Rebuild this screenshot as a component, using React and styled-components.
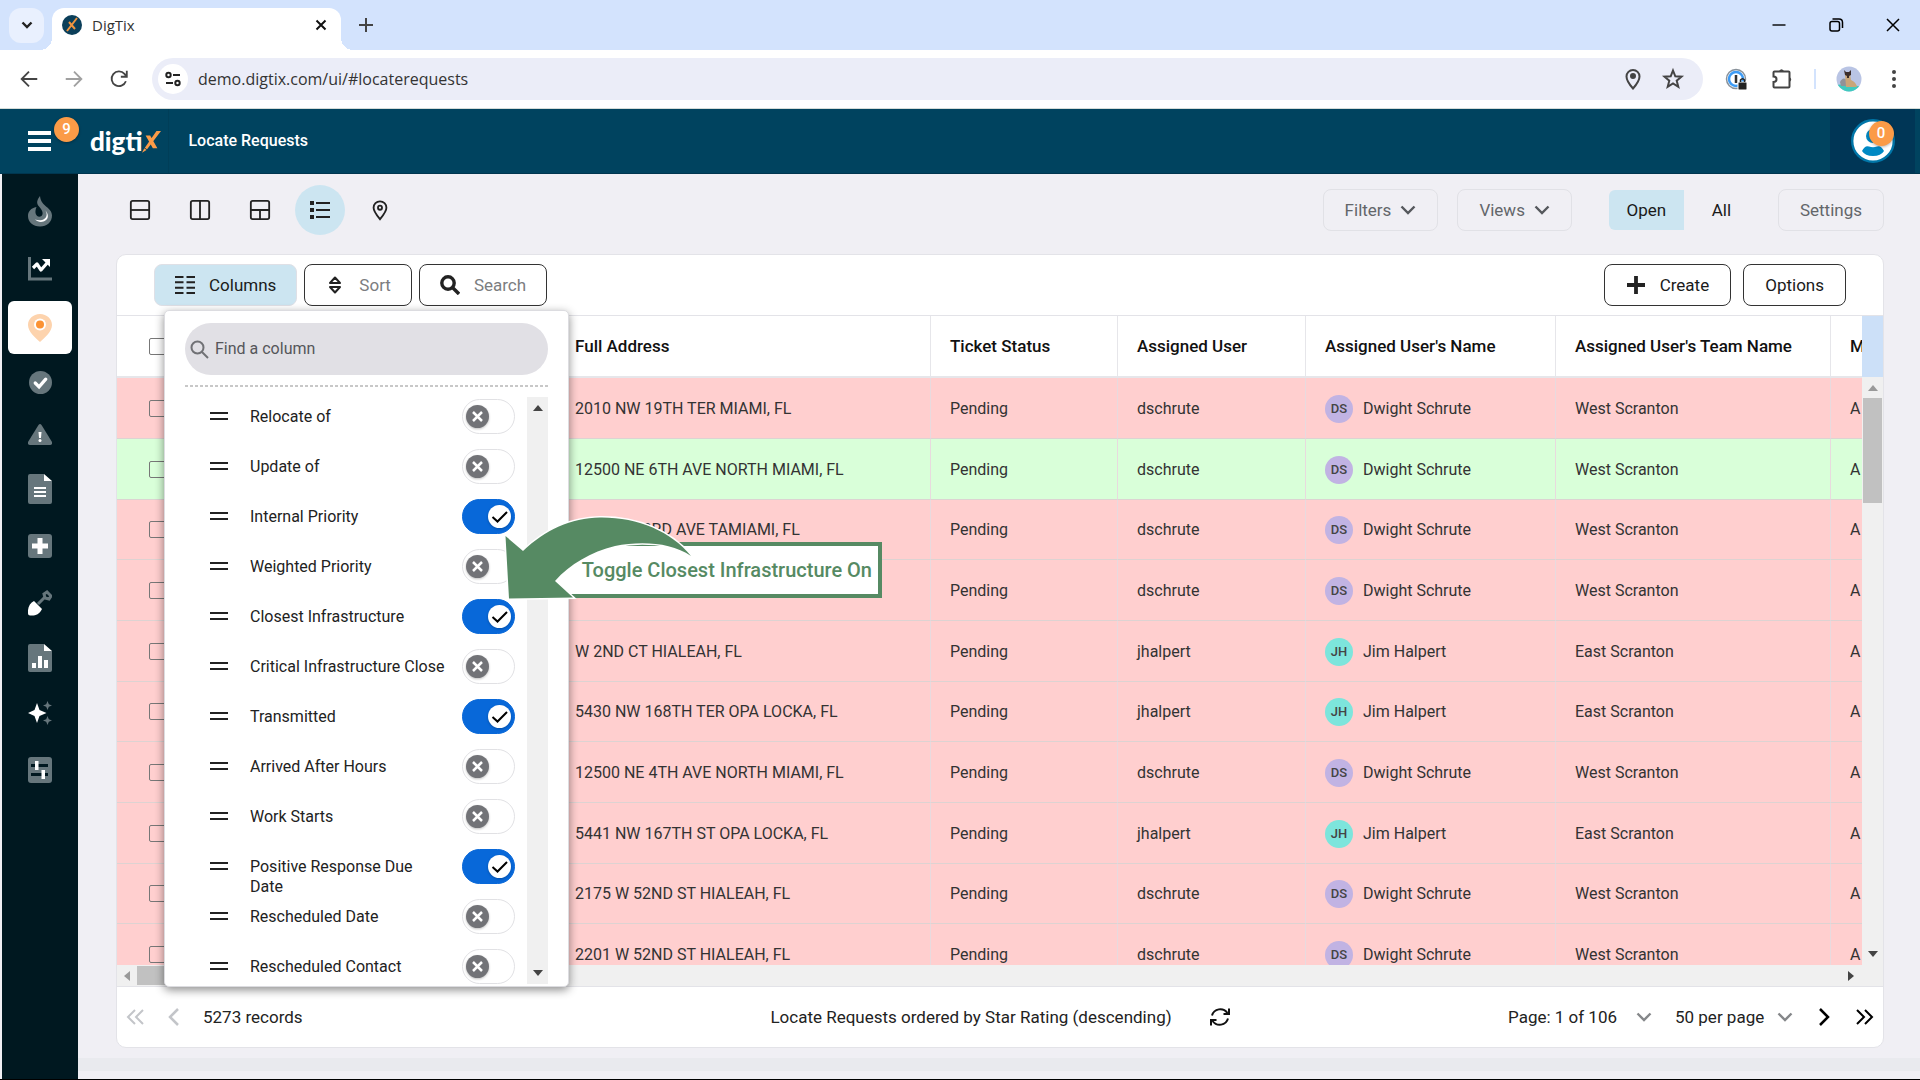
import React, { useState } from "react";
import styled, { createGlobalStyle, css } from "styled-components";

const GlobalStyle = createGlobalStyle`
  * {
    box-sizing: border-box;
  }

  body {
    margin: 0;
    background: #f0eff4;
    color: #222;
    font-family: Roboto, "Liberation Sans", sans-serif;
    font-size: 16px;
    line-height: 20px;
  }

  button, input, select {
    font: inherit;
    color: inherit;
    margin: 0;
    padding: 0;
    border: 0;
    background: none;
  }

  svg {
    display: block;
    flex-shrink: 0;
  }
`;

const Page = styled.div`
  display: flex;
  flex-direction: column;
  height: 100vh;
  min-width: 1280px;
  overflow: hidden;
  border-bottom: 1px solid #000;
`;

/* Browser chrome */

const TabStrip = styled.div`
  display: flex;
  align-items: center;
  height: 50px;
  padding: 0 19px 0 9px;
  background: #d3e3fd;
  font-family: "Open Sans", "Noto Sans", sans-serif;
`;

const TabSearch = styled.button`
  display: flex;
  align-items: center;
  justify-content: center;
  width: 35px;
  height: 35px;
  border-radius: 12px;
  background: #e9f0fe;
`;

const Tab = styled.div`
  position: relative;
  display: flex;
  align-items: center;
  align-self: flex-end;
  width: 289px;
  height: 42px;
  margin-left: 8px;
  padding: 0 14px 8px 10px;
  border-radius: 12px 12px 0 0;
  background: #fff;
  color: #333;
  font-size: 15px;

  &::before,
  &::after {
    content: "";
    position: absolute;
    bottom: 0;
    width: 12px;
    height: 12px;
  }

  &::before {
    left: -12px;
    background: radial-gradient(circle at 0 0, transparent 12px, #fff 12px);
  }

  &::after {
    right: -12px;
    background: radial-gradient(circle at 100% 0, transparent 12px, #fff 12px);
  }
`;

const TabTitle = styled.span`
  flex: 1;
  margin-left: 10px;
`;

const NewTab = styled.button`
  margin-left: 18px;
`;

const WindowButtons = styled.div`
  display: flex;
  gap: 41px;
  margin-left: auto;
`;

const AddressBar = styled.div`
  display: flex;
  align-items: center;
  height: 59px;
  padding: 0 18px;
  border-bottom: 1px solid #d5dcd8;
  background: #fff;
`;

const NavButtons = styled.div`
  display: flex;
  gap: 23px;
  margin-right: 22px;
`;

const Omnibox = styled.label`
  display: flex;
  flex: 1;
  align-items: center;
  height: 42px;
  padding: 0 18px 0 6px;
  border-radius: 21px;
  background: #ebedf8;
`;

const SiteInfo = styled.span`
  display: flex;
  align-items: center;
  justify-content: center;
  width: 30px;
  height: 30px;
  border-radius: 50%;
  background: #fff;
`;

const UrlInput = styled.input`
  flex: 1;
  margin-left: 10px;
  outline: none;
  color: #333;
  font-family: "Open Sans", "Noto Sans", sans-serif;
  font-size: 16px;
`;

const OmniboxIcons = styled.span`
  display: flex;
  gap: 16px;
`;

const Extensions = styled.div`
  display: flex;
  align-items: center;
  margin-left: 22px;
`;

const PuzzleButton = styled.button`
  margin-left: 23px;
`;

const ChromeDivider = styled.span`
  width: 2px;
  height: 20px;
  margin: 0 20px;
  background: #d3e3fd;
`;

const MoreButton = styled.button`
  margin: 0 5px 0 29px;
`;

/* Application header */

const AppHeader = styled.header`
  display: flex;
  align-items: center;
  flex-shrink: 0;
  height: 65px;
  padding-right: 5px;
  background: #00435f;
  border-bottom: 1px solid #00364f;
  color: #fff;
`;

const MenuButton = styled.button`
  position: relative;
  margin-left: 28px;
`;

const Count = styled.span`
  position: absolute;
  top: -14px;
  left: ${props => props.$left}px;
  width: 25px;
  height: 25px;
  border-radius: 50%;
  background: #fb9b47;
  box-shadow: 0 1px 3px rgba(0, 0, 0, 0.3);
  color: #fff;
  font-size: 15px;
  font-weight: 500;
  line-height: 25px;
  text-align: center;
`;

const Logo = styled.a`
  display: flex;
  align-items: center;
  height: 100%;
  margin-left: 39px;
  padding-right: 7px;
  border-right: 1px solid #003e58;
  color: #fff;
  font-family: Lato, sans-serif;
  font-size: 26px;
  font-weight: 900;
  text-decoration: none;
`;

const PageTitle = styled.h1`
  flex: 1;
  margin: 0 0 0 19px;
  font-size: 16px;
  font-weight: 500;
`;

const UserArea = styled.div`
  display: flex;
  align-items: center;
  justify-content: center;
  width: 85px;
  height: 100%;
  background: #003656;
`;

const UserButton = styled.button`
  position: relative;

  ${Count} {
    top: 2px;
  }
`;

const Body = styled.div`
  display: flex;
  flex: 1;
  min-height: 0;
`;

const SideNav = styled.nav`
  display: flex;
  flex-direction: column;
  align-items: center;
  width: 78px;
  padding-top: 11px;
  border-left: 2px solid #f0eff4;
  background: #001820;
`;

const SideLink = styled.a`
  display: flex;
  align-items: center;
  justify-content: center;
  width: 64px;
  height: ${props => props.$height || 56}px;
  border-radius: 6px;
  ${props => props.$active && css`background: #fff;`}
`;

const Main = styled.main`
  display: flex;
  flex: 1;
  flex-direction: column;
  min-width: 0;
`;

const ViewBar = styled.div`
  display: flex;
  align-items: center;
  height: 71px;
  margin-bottom: 9px;
  padding: 0 36px 0 37px;
`;

const Layouts = styled.div`
  display: flex;
  flex: 1;
  gap: 10px;
`;

const LayoutButton = styled.button`
  display: flex;
  align-items: center;
  justify-content: center;
  width: 50px;
  height: 50px;
  border-radius: 50%;
  ${props => props.$active && css`background: #cce5f1;`}
`;

const ViewActions = styled.div`
  display: flex;
  align-items: center;
  gap: 19px;
`;

const GhostButton = styled.button`
  display: flex;
  align-items: center;
  justify-content: center;
  gap: 9px;
  height: 42px;
  padding: 0 21px;
  border: 1px solid #e1e1e6;
  border-radius: 8px;
  color: #63666a;
  font-size: 17px;
`;

const Segmented = styled.div`
  display: flex;
  margin-left: 18px;
`;

const Segment = styled.button`
  width: 75px;
  height: 40px;
  border-radius: 6px 0 0 6px;
  color: #1a1a1a;
  font-size: 17px;
  ${props => props.$active && css`background: #cce5f1;`}
`;

/* Card with the grid */

const Card = styled.section`
  display: flex;
  flex: 1;
  flex-direction: column;
  min-height: 0;
  margin: 0 36px 0 38px;
  border: 1px solid #e3e3e8;
  border-radius: 10px;
  background: #fff;
`;

const GridToolbar = styled.div`
  display: flex;
  align-items: center;
  justify-content: space-between;
  height: 61px;
  padding: 0 37px;
  border-bottom: 1px solid #e3e3e8;
`;

const ToolGroup = styled.div`
  display: flex;
  gap: ${props => props.$gap}px;
`;

const ToolButton = styled.button`
  display: flex;
  align-items: center;
  gap: 14px;
  height: 42px;
  padding: 0 20px;
  border: 1px solid #333;
  border-radius: 8px;
  background: #fff;
  color: ${props => (props.$muted ? "#7b7d80" : "#1a1a1a")};
  font-size: 17px;

  ${props =>
    props.$active && css`
      border-color: #dfe0e6;
      background: #cce5f1;
    `}
`;

const ActionButton = styled(ToolButton)`
  padding: 0 21px;
`;

const MenuAnchor = styled.div`
  position: relative;
`;

const ColumnMenu = styled.div`
  position: absolute;
  z-index: 2;
  top: 46px;
  left: 10px;
  width: 405px;
  padding: 12px 20px 2px;
  border: 1px solid #dcdce0;
  border-radius: 5px;
  background: #fff;
  box-shadow: 0 3px 10px rgba(0, 0, 0, 0.45);
`;

const ColumnSearch = styled.label`
  display: flex;
  align-items: center;
  gap: 6px;
  height: 52px;
  padding-left: 5px;
  border-radius: 26px;
  background: #e1e0e5;
`;

const ColumnSearchInput = styled.input`
  flex: 1;
  outline: none;

  &::placeholder {
    color: #55565a;
    opacity: 1;
  }
`;

const DottedLine = styled.hr`
  height: 2px;
  margin: 10px 0;
  border: 0;
  background: repeating-linear-gradient(90deg, #c8c8c8 0 3px, transparent 3px 5px);
`;

const ColumnScroller = styled.div`
  display: flex;
  justify-content: space-between;
  height: 587px;
`;

const ColumnList = styled.ul`
  flex: 1;
  margin: 0;
  padding: 0 12px 0 25px;
  overflow: hidden;
  list-style: none;
`;

const ColumnItem = styled.li`
  display: flex;
  align-items: flex-start;
  height: 50px;
  overflow: hidden;
`;

const DragHandle = styled.span`
  width: 18px;
  height: 8px;
  margin: 15px 22px 0 0;
  border: solid #222;
  border-width: 2px 0;
`;

const ColumnLabel = styled.label`
  flex: 1;
  padding: 10px 14px 0 0;
`;

const Toggle = styled.span`
  position: relative;
  display: flex;
  margin-top: 2px;
`;

const ToggleInput = styled.input`
  appearance: none;
  width: 53px;
  height: 35px;
  border: 1px solid #e1e1e4;
  border-radius: 18px;
  background: #fff;

  &:checked {
    border-color: #0868d9;
    background: #0868d9;
  }
`;

const Knob = styled.svg`
  position: absolute;
  top: 6px;
  left: ${props => (props.$on ? 26 : 4)}px;
  pointer-events: none;
  filter: drop-shadow(0 1px 1px rgba(0, 0, 0, 0.25));
`;

const MenuTrack = styled.div`
  display: flex;
  flex-direction: column;
  align-items: center;
  justify-content: space-between;
  width: 21px;
  padding: 8px 0;
  background: #f0f0f0;
`;

const Callout = styled.div`
  position: absolute;
  z-index: 3;
  top: 231px;
  left: 379px;
  width: 338px;
  height: 56px;
  padding: 0 6px;
  border: 4px solid #568a63;
  background: #fff;
  color: #568a63;
  font-size: 20px;
  font-weight: 500;
  line-height: 49px;
  text-align: right;
  white-space: nowrap;
`;

const CalloutArrow = styled.svg`
  position: absolute;
  top: -36px;
  left: -48px;
`;

const GridArea = styled.div`
  display: grid;
  flex: 1;
  grid-template-columns: minmax(0, 1fr) 21px;
  grid-template-rows: minmax(0, 1fr) 21px;
  min-height: 0;
`;

const GridViewport = styled.div`
  overflow: hidden;
`;

const Table = styled.table`
  width: 1929px;
  border-collapse: separate;
  border-spacing: 0;
  table-layout: fixed;
`;

const HeadCell = styled.th`
  height: 62px;
  padding: 0 19px;
  border-right: 1px solid #e6e6ea;
  border-bottom: 2px solid #e6e6ea;
  color: #111;
  font-size: 17px;
  font-weight: 500;
  text-align: left;
  white-space: nowrap;
`;

const Row = styled.tr`
  height: 61px;
  background: ${props => (props.$done ? "#d9ffd9" : "#ffcfcf")};

  &:nth-child(3n) {
    height: 60px;
  }
`;

const Cell = styled.td`
  padding: 1px 19px 0;
  border-right: 1px solid #e8dade;
  border-bottom: 1px solid #ddd3d2;
  color: #333;
  white-space: nowrap;
`;

const CheckCell = styled(Cell)`
  padding: 0 0 0 32px;
  border-right: 0;
`;

const CheckHeadCell = styled(HeadCell)`
  padding: 0 0 0 32px;
  border-right: 0;
`;

const RowCheck = styled.input`
  appearance: none;
  display: block;
  width: 17px;
  height: 17px;
  border: 1px solid #777;
  border-radius: 2px;
`;

const Person = styled.div`
  display: flex;
  align-items: center;
  gap: 10px;
`;

const Initials = styled.span`
  width: 28px;
  height: 28px;
  border-radius: 50%;
  background: ${props => props.$color};
  color: #444;
  font-size: 13px;
  font-weight: 500;
  line-height: 28px;
  text-align: center;
`;

/* Drawn scrollbars */

const ScrollColumn = styled.div`
  display: flex;
  flex-direction: column;
`;

const ScrollHead = styled.div`
  height: 61px;
  background: #cce0f8;
`;

const VerticalTrack = styled(MenuTrack)`
  flex: 1;
`;

const VerticalThumb = styled.div`
  width: 19px;
  height: 105px;
  margin: 7px 0 auto;
  background: #c1c1c1;
`;

const HorizontalTrack = styled.div`
  display: flex;
  grid-column: 1 / -1;
  align-items: center;
  padding: 0 29px 0 7px;
  background: #f0f0f0;
`;

const HorizontalThumb = styled.div`
  width: 300px;
  height: 19px;
  margin: 0 auto 0 7px;
  background: #c1c1c1;
`;

const Footer = styled.footer`
  display: grid;
  grid-template-columns: 1fr auto 1fr;
  align-items: center;
  height: 61px;
  padding: 0 9px;
  border-top: 1px solid #e3e3e8;
  font-size: 17px;
`;

const FooterGroup = styled.div`
  display: flex;
  align-items: center;
  gap: ${props => props.$gap}px;
  justify-content: ${props => (props.$end ? "flex-end" : "flex-start")};
`;

const SelectBox = styled.label`
  display: flex;
  align-items: center;
  gap: ${props => props.$gap}px;
`;

const Select = styled.select`
  appearance: none;
  outline: none;
`;

const BottomBand = styled.div`
  height: 13px;
  margin: 10px 0 8px;
  background: #e9eaee;
`;

const Icon = ({ size = 24, width, height, box, stroke = "#222", weight = 2, children }) => (
  <svg
    width={width || size}
    height={height || size}
    viewBox={box || "0 0 24 24"}
    fill="none"
    stroke={stroke}
    strokeWidth={weight}
    aria-hidden="true"
  >
    {children}
  </svg>
);

const Arrow = ({ points, color = "#444", width = 10, height = 6 }) => (
  <svg width={width} height={height} viewBox={`0 0 ${width} ${height}`} aria-hidden="true">
    <polygon points={points} fill={color} />
  </svg>
);

const UP = "0,6 5,0 10,6";
const DOWN = "0,0 10,0 5,6";

const Chevron = ({ color = "#55585c", weight = 2.4 }) => (
  <Icon width={16} height={10} box="0 0 16 10" stroke={color} weight={weight}>
    <path d="M1.5 1.5 8 8l6.500-6.500" />
  </Icon>
);

const GREY = "#66767c";

const navItems = [
  {
    name: "Activity",
    height: 52,
    icon: (
      <svg width="24" height="31" viewBox="0 0 24 31">
        <path fill={GREY} d="M12 0c-3 4-4 7-1 10.500 3 3 5 7 2.500 9.500-4 2.500-8-2-5-9C3 12 0 15.500 0 20c0 6 5 10.500 12 10.500S24 26 24 19.500C24 11 13 11 12 0z" />
        <path fill="#fff" d="M17.500 14.500c4 7-3 11.500-10.500 9 6 6 18 0 10.500-9z" />
      </svg>
    )
  },
  {
    name: "Analytics",
    height: 64,
    icon: (
      <svg width="24" height="24" viewBox="0 0 24 24" fill="none">
        <path stroke={GREY} strokeWidth="3" d="M1.500 0v22H24" />
        <path stroke="#fff" strokeWidth="3.200" strokeLinejoin="round" d="m5 11 4-4 4 6 7-8" />
        <path fill="#fff" d="M14 2h8v8z" />
      </svg>
    )
  },
  {
    name: "Locate Requests",
    height: 53,
    active: true,
    icon: (
      <svg width="24" height="28" viewBox="0 0 24 28">
        <path fill="#fdd3ad" d="M12 0c7 0 12 5 12 11 0 7-8 13-12 17C8 24 0 18 0 11 0 5 5 0 12 0z" />
        <circle cx="12" cy="10.500" r="6" fill="#fff" />
        <circle cx="12" cy="10.500" r="4" fill="#fb9233" />
      </svg>
    )
  },
  {
    name: "Completed",
    icon: (
      <svg width="23" height="23" viewBox="0 0 24 24" fill="none">
        <circle cx="12" cy="12" r="12" fill={GREY} />
        <path stroke="#fff" strokeWidth="3.400" strokeLinecap="round" d="m6.500 12.500 4 4 7-8" />
      </svg>
    )
  },
  {
    name: "Alerts",
    height: 48,
    icon: (
      <svg width="24" height="21" viewBox="0 0 24 21">
        <path fill={GREY} d="M10.500 1q1.500-2 3 0L24 18q.5 3-2 3H2q-2.500 0-2-3z" />
        <path fill="#fff" d="M10.500 8h3l-.5 6h-2z" />
        <circle cx="12" cy="16.500" r="1.500" fill="#fff" />
      </svg>
    )
  },
  {
    name: "Documents",
    height: 61,
    icon: (
      <svg width="24" height="30" viewBox="0 0 24 30">
        <path fill={GREY} d="M2 0h14v7h8v21a2 2 0 0 1-2 2H2a2 2 0 0 1-2-2V2a2 2 0 0 1 2-2z" />
        <path fill="#fff" d="m16 0 8 7h-8zM6 13h12v2H6zm0 4h12v2H6zm0 4h12v2H6z" />
      </svg>
    )
  },
  {
    name: "Add",
    height: 54,
    icon: (
      <svg width="24" height="24" viewBox="0 0 24 24">
        <rect width="24" height="24" rx="3" fill={GREY} />
        <path fill="#fff" d="M9.500 4h5v5.500H20v5h-5.500V20h-5v-5.500H4v-5h5.500z" />
      </svg>
    )
  },
  {
    name: "Excavation",
    height: 60,
    icon: (
      <svg width="24" height="26" viewBox="0 0 24 26" fill="none">
        <path stroke={GREY} strokeWidth="3" d="m10 14 7-7M16 4l3-2 4 4-2 3-4-1z" />
        <path fill="#fff" d="m6 11 8 8c-3 6-7 7-12 6.500q-2 0-2-2C-.5 17 2 13 6 11z" />
      </svg>
    )
  },
  {
    name: "Reports",
    height: 50,
    icon: (
      <svg width="24" height="28" viewBox="0 0 24 28">
        <path fill={GREY} d="M2 0h14v7h8v19a2 2 0 0 1-2 2H2a2 2 0 0 1-2-2V2a2 2 0 0 1 2-2z" />
        <path fill="#fff" d="m16 0 8 7h-8zM4 19h4v5H4zm6-7h4v12h-4zm6 4h4v8h-4z" />
      </svg>
    )
  },
  {
    name: "Assistant",
    height: 60,
    icon: (
      <svg width="24" height="24" viewBox="0 0 24 24">
        <path fill="#fff" d="m9 2 2.500 7 7 3-7 3L9 22l-2.500-7L0 12l6.500-3z" />
        <path fill={GREY} d="m19.500 0 1.300 3.200L24 4.500l-3.200 1.300L19.500 9l-1.300-3.200L15 4.500l3.200-1.300zm0 15 1.300 3.200 3.200 1.300-3.200 1.300-1.300 3.200-1.300-3.200-3.200-1.300 3.200-1.300z" />
      </svg>
    )
  },
  {
    name: "Preferences",
    height: 54,
    icon: (
      <svg width="24" height="26" viewBox="0 0 24 26">
        <rect width="24" height="26" rx="3" fill={GREY} />
        <path fill="#001820" d="M3 7h17v3H3zm0 9h17v3H3z" />
        <path fill="#fff" d="M7 4h3.500v9H7zm6.500 9H17v9h-3.500z" />
      </svg>
    )
  }
];

const columns = [
  { name: "Relocate of" },
  { name: "Update of" },
  { name: "Internal Priority", on: true },
  { name: "Weighted Priority" },
  { name: "Closest Infrastructure", on: true },
  { name: "Critical Infrastructure Close" },
  { name: "Transmitted", on: true },
  { name: "Arrived After Hours" },
  { name: "Work Starts" },
  { name: "Positive Response Due Date", on: true },
  { name: "Rescheduled Date" },
  { name: "Rescheduled Contact" }
];

const dwight = { login: "dschrute", initials: "DS", name: "Dwight Schrute", team: "West Scranton", color: "#c1b3e3" };
const jim = { login: "jhalpert", initials: "JH", name: "Jim Halpert", team: "East Scranton", color: "#7de5dc" };

const requests = [
  { address: "2010 NW 19TH TER MIAMI, FL", user: dwight },
  { address: "12500 NE 6TH AVE NORTH MIAMI, FL", user: dwight, done: true },
  { address: "1230 SW 3RD AVE TAMIAMI, FL", user: dwight },
  { address: "", user: dwight },
  { address: "W 2ND CT HIALEAH, FL", user: jim },
  { address: "5430 NW 168TH TER OPA LOCKA, FL", user: jim },
  { address: "12500 NE 4TH AVE NORTH MIAMI, FL", user: dwight },
  { address: "5441 NW 167TH ST OPA LOCKA, FL", user: jim },
  { address: "2175 W 52ND ST HIALEAH, FL", user: dwight },
  { address: "2201 W 52ND ST HIALEAH, FL", user: dwight }
];

const BrowserChrome = () => (
  <>
    <TabStrip>
      <TabSearch aria-label="Search tabs">
        <Icon width={12} height={8} box="0 0 12 8" weight={2.4}>
          <path d="m1.500 1.500 4.500 4.500 4.500-4.500" />
        </Icon>
      </TabSearch>
      <Tab>
        <svg width="20" height="20" viewBox="0 0 20 20" aria-hidden="true">
          <circle cx="10" cy="10" r="10" fill="#0b3f5a" />
          <path d="M15 3 5 16M7 7l6 7" stroke="#f0953f" strokeWidth="2" />
        </svg>
        <TabTitle>DigTix</TabTitle>
        <button aria-label="Close tab">
          <Icon size={12} box="0 0 12 12" stroke="#111">
            <path d="m1.500 1.500 9 9m0-9-9 9" />
          </Icon>
        </button>
      </Tab>
      <NewTab aria-label="New tab">
        <Icon size={14} box="0 0 14 14" stroke="#444">
          <path d="M7 0v14M0 7h14" />
        </Icon>
      </NewTab>
      <WindowButtons>
        <button aria-label="Minimize">
          <Icon size={16} box="0 0 16 16" stroke="#000" weight={1.4}>
            <path d="M1.500 8h13" />
          </Icon>
        </button>
        <button aria-label="Restore">
          <Icon size={16} box="0 0 16 16" stroke="#000" weight={1.5}>
            <rect x="2" y="4.500" width="9.500" height="9.500" rx="2" />
            <path d="M4.500 2H11q3.500 0 3.500 3.500V11" />
          </Icon>
        </button>
        <button aria-label="Close window">
          <Icon size={16} box="0 0 16 16" stroke="#000" weight={1.5}>
            <path d="m2 2 12 12m0-12L2 14" />
          </Icon>
        </button>
      </WindowButtons>
    </TabStrip>
    <AddressBar>
      <NavButtons>
        <button aria-label="Back">
          <Icon size={22} stroke="#444">
            <path d="M21 12H4m8-8-8 8 8 8" />
          </Icon>
        </button>
        <button aria-label="Forward">
          <Icon size={22} stroke="#a0a0a0">
            <path d="M3 12h17m-8-8 8 8-8 8" />
          </Icon>
        </button>
        <button aria-label="Reload">
          <Icon size={22} stroke="#444">
            <path d="M19.500 14.500A8 8 0 1 1 18 6.500l2 2.500M20.500 3v6.500H14" />
          </Icon>
        </button>
      </NavButtons>
      <Omnibox>
        <SiteInfo>
          <Icon size={16} box="0 0 16 16">
            <circle cx="3.500" cy="4" r="2.200" />
            <path d="M8 4h7M1 12h7" />
            <circle cx="12.500" cy="12" r="2.200" />
          </Icon>
        </SiteInfo>
        <UrlInput aria-label="Address" defaultValue="demo.digtix.com/ui/#locaterequests" />
        <OmniboxIcons>
          <Icon stroke="#444">
            <path d="M12 21.500C8 17 5.500 13 5.500 9.500a6.500 6.500 0 0 1 13 0c0 3.500-2.500 7.500-6.500 12z" />
            <circle cx="12" cy="9" r="2" fill="#444" />
          </Icon>
          <Icon stroke="#444">
            <path d="m12 3.500 2.300 5.800 6.200.4-4.800 4 1.600 6.100-5.300-3.400-5.300 3.400 1.600-6.100-4.800-4 6.200-.4z" />
          </Icon>
        </OmniboxIcons>
      </Omnibox>
      <Extensions>
        <button aria-label="Password manager">
          <svg width="22" height="22" viewBox="0 0 22 22" fill="none">
            <circle cx="11" cy="11" r="9.500" stroke="#88919a" strokeWidth="1.500" />
            <circle cx="11" cy="11" r="7" stroke="#3d9bf5" strokeWidth="2.500" />
            <path d="M11 7v8" stroke="#333" strokeWidth="2.500" />
            <rect x="13" y="14" width="9" height="8" rx="1" fill="#222" stroke="#fff" />
            <path d="M15.500 14v-2q2-2.500 4 0v2" stroke="#222" strokeWidth="1.500" />
          </svg>
        </button>
        <PuzzleButton aria-label="Extensions">
          <Icon stroke="#444">
            <path d="M3.500 5.500q0-1 1-1h14q1 0 1 1v14q0 1-1 1h-14q-1 0-1-1v-4.500c4 0 4-5.500 0-5.500z" />
            <path d="M9 4q2.500-3.500 5 0zm10.500 6q3.500 2.500 0 5z" fill="#444" stroke="none" />
          </Icon>
        </PuzzleButton>
        <ChromeDivider />
        <svg width="26" height="26" viewBox="0 0 26 26" aria-hidden="true">
          <clipPath id="profile">
            <circle cx="13" cy="13" r="12.500" />
          </clipPath>
          <g clipPath="url(#profile)">
            <path fill="#b9c4e4" d="M0 0h26v26H0z" />
            <path fill="#3fcabf" d="M0 19q13-2 26 2v5H0z" />
            <path fill="#8f9298" d="M4 16q3-6 7-2l1 6H5z" />
            <path fill="#c9a578" d="M9 8h5l1 6q5 2 6 7H10z" />
            <path fill="#3b2c2a" d="m8 4 2 2h3l2-2v5l-2 1v2h-2v-2L9 9z" />
          </g>
        </svg>
        <MoreButton aria-label="Browser menu">
          <svg width="6" height="20" viewBox="0 0 6 20" fill="#444">
            <circle cx="3" cy="3" r="2" />
            <circle cx="3" cy="10" r="2" />
            <circle cx="3" cy="17" r="2" />
          </svg>
        </MoreButton>
      </Extensions>
    </AddressBar>
  </>
);

const TopHeader = () => (
  <AppHeader>
    <MenuButton aria-label="Menu">
      <Icon width={23} height={20} box="0 0 23 20" stroke="#fff" weight={4}>
        <path d="M0 2h23M0 10h23M0 18h23" />
      </Icon>
      <Count $left={26}>9</Count>
    </MenuButton>
    <Logo href="#locaterequests">
      digti
      <svg width="19" height="27" viewBox="0 0 21 27" aria-hidden="true">
        <path fill="#fb9b47" d="M16 2h5L5 23l-5 3 2-4zM4 7h5l8 14h-5z" />
        <path stroke="#00435f" d="m2 20 4 3" />
      </svg>
    </Logo>
    <PageTitle>Locate Requests</PageTitle>
    <UserArea>
      <UserButton aria-label="Account">
        <svg width="44" height="44" viewBox="0 0 44 44" aria-hidden="true">
          <circle cx="22" cy="22" r="20.800" fill="#fff" stroke="#0076a8" strokeWidth="2.400" />
          <circle cx="22" cy="17" r="7" fill="#0089c4" />
          <path fill="#0089c4" d="M11 32q3-6 7-4.500 4 1.500 8 0 4-1.500 7 4.500-3 5-11 5t-11-5z" />
        </svg>
        <Count $left={18}>0</Count>
      </UserButton>
    </UserArea>
  </AppHeader>
);

const ColumnToggle = ({ column }) => {
  const [on, setOn] = useState(!!column.on);
  const id = column.name.toLowerCase().replace(/ /g, "-");

  return (
    <ColumnItem>
      <DragHandle />
      <ColumnLabel htmlFor={id}>{column.name}</ColumnLabel>
      <Toggle>
        <ToggleInput id={id} type="checkbox" checked={on} onChange={() => setOn(!on)} />
        <Knob $on={on} width="23" height="23" viewBox="0 0 23 23" fill="none">
          <circle cx="11.500" cy="11.500" r="11.500" fill={on ? "#fff" : "#727377"} />
          {on ? (
            <path d="m4.500 12 5 4.500 9.500-9.500" stroke="#000" strokeWidth="2" />
          ) : (
            <path d="m7 7 9 9m0-9-9 9" stroke="#fff" strokeWidth="2.500" />
          )}
        </Knob>
      </Toggle>
    </ColumnItem>
  );
};

const Hint = () => (
  <Callout>
    Toggle Closest Infrastructure On
    <CalloutArrow width="200" height="96" viewBox="500 510 200 96" aria-hidden="true">
      <path
        d="M505.500 536 523 551C545 530 571 518 600 517.500 637 517 671 531 691 556 671 542 640 541 615 546 591 552 570 564 555 581L573 597.500 509 598.500z"
        fill="#568a63"
        stroke="#fff"
        strokeWidth="3"
        paintOrder="stroke"
      />
    </CalloutArrow>
  </Callout>
);

const ColumnPicker = () => (
  <ColumnMenu>
    <ColumnSearch>
      <Icon width={19} height={19} box="0 0 19 19" stroke="#707175" weight={2}>
        <circle cx="7.500" cy="7.500" r="6" />
        <path d="m12 12 6 6" />
      </Icon>
      <ColumnSearchInput aria-label="Find a column" placeholder="Find a column" />
    </ColumnSearch>
    <DottedLine />
    <ColumnScroller>
      <ColumnList>
        {columns.map(column => (
          <ColumnToggle key={column.name} column={column} />
        ))}
      </ColumnList>
      <MenuTrack>
        <Arrow points={UP} />
        <Arrow points={DOWN} />
      </MenuTrack>
    </ColumnScroller>
    <Hint />
  </ColumnMenu>
);

const GridActions = () => (
  <GridToolbar>
    <ToolGroup $gap={7}>
      <MenuAnchor>
        <ToolButton $active>
          <Icon width={20} height={18} box="0 0 20 18">
            <path d="M0 1h8.500M11.500 1H20M0 6.300h8.500M11.500 6.300H20M0 11.700h8.500M11.500 11.700H20M0 17h8.500M11.500 17H20" />
          </Icon>
          Columns
        </ToolButton>
        <ColumnPicker />
      </MenuAnchor>
      <ToolButton $muted>
        <Icon width={20} height={18} box="0 0 20 18">
          <path d="m5 7 5-5.500L15 7zm0 4 5 5.500 5-5.500z" strokeLinejoin="round" />
        </Icon>
        Sort
      </ToolButton>
      <ToolButton $muted>
        <Icon width={20} height={20} box="0 0 20 20" weight={3.4}>
          <circle cx="8" cy="8" r="6.200" />
          <path d="m12.500 12.500 6.500 6.500" />
        </Icon>
        Search
      </ToolButton>
    </ToolGroup>
    <ToolGroup $gap={12}>
      <ActionButton>
        <Icon width={20} height={20} box="0 0 20 20" weight={3.8}>
          <path d="M10 1v18M1 10h18" />
        </Icon>
        Create
      </ActionButton>
      <ActionButton>Options</ActionButton>
    </ToolGroup>
  </GridToolbar>
);

const Grid = () => (
  <GridArea>
    <GridViewport>
      <Table>
        <colgroup>
          <col width="59" />
          <col width="380" />
          <col width="375" />
          <col width="187" />
          <col width="188" />
          <col width="250" />
          <col width="275" />
          <col width="215" />
        </colgroup>
        <thead>
          <tr>
            <CheckHeadCell>
              <RowCheck type="checkbox" aria-label="Select all" />
            </CheckHeadCell>
            <HeadCell />
            <HeadCell>Full Address</HeadCell>
            <HeadCell>Ticket Status</HeadCell>
            <HeadCell>Assigned User</HeadCell>
            <HeadCell>Assigned User's Name</HeadCell>
            <HeadCell>Assigned User's Team Name</HeadCell>
            <HeadCell>M</HeadCell>
          </tr>
        </thead>
        <tbody>
          {requests.map(({ address, user, done }, i) => (
            <Row key={i} $done={done}>
              <CheckCell>
                <RowCheck type="checkbox" aria-label={`Select row ${i + 1}`} />
              </CheckCell>
              <Cell />
              <Cell>{address}</Cell>
              <Cell>Pending</Cell>
              <Cell>{user.login}</Cell>
              <Cell>
                <Person>
                  <Initials $color={user.color}>{user.initials}</Initials>
                  {user.name}
                </Person>
              </Cell>
              <Cell>{user.team}</Cell>
              <Cell>A</Cell>
            </Row>
          ))}
        </tbody>
      </Table>
    </GridViewport>
    <ScrollColumn>
      <ScrollHead />
      <VerticalTrack>
        <Arrow points={UP} color="#999" />
        <VerticalThumb />
        <Arrow points={DOWN} />
      </VerticalTrack>
    </ScrollColumn>
    <HorizontalTrack>
      <Arrow points="6,0 0,5 6,10" width={6} height={10} color="#999" />
      <HorizontalThumb />
      <Arrow points="0,0 6,5 0,10" width={6} height={10} />
    </HorizontalTrack>
  </GridArea>
);

const Pager = () => (
  <Footer>
    <FooterGroup $gap={24}>
      <button aria-label="First page">
        <Icon width={18} height={16} box="0 0 18 16" stroke="#c3c5c9">
          <path d="M9 1 2 8l7 7m8-14-7 7 7 7" />
        </Icon>
      </button>
      <button aria-label="Previous page">
        <Icon width={11} height={18} box="0 0 11 18" stroke="#c3c5c9" weight={2.5}>
          <path d="M10 1 2 9l8 8" />
        </Icon>
      </button>
      <span>5273 records</span>
    </FooterGroup>
    <FooterGroup $gap={38}>
      <span>Locate Requests ordered by Star Rating (descending)</span>
      <button aria-label="Refresh">
        <Icon width={20} height={18} box="0 0 20 18" stroke="#111" weight={2}>
          <path d="M2 7.500C4 .5 13-1 17.500 5M18 10.500c-2 7-11 8.500-15.500 2.500M19 .5V6h-5.500M1 17.500V12h5.500" />
        </Icon>
      </button>
    </FooterGroup>
    <FooterGroup $end $gap={23}>
      <SelectBox $gap={18}>
        <Select aria-label="Page">
          <option>Page: 1 of 106</option>
        </Select>
        <Chevron color="#85878a" />
      </SelectBox>
      <SelectBox $gap={12}>
        <Select aria-label="Records per page">
          <option>50 per page</option>
        </Select>
        <Chevron color="#85878a" />
      </SelectBox>
      <button aria-label="Next page">
        <Icon width={16} height={18} box="0 0 16 18" stroke="#000" weight={2.5}>
          <path d="m4 1 8 8-8 8" />
        </Icon>
      </button>
      <button aria-label="Last page">
        <Icon width={19} height={16} box="0 0 19 16" stroke="#000">
          <path d="m2 1 7 7-7 7m8-14 7 7-7 7" />
        </Icon>
      </button>
    </FooterGroup>
  </Footer>
);

export default () => (
  <Page>
    <GlobalStyle />
    <BrowserChrome />
    <TopHeader />
    <Body>
      <SideNav>
        {navItems.map(item => (
          <SideLink key={item.name} href="#" aria-label={item.name} $height={item.height} $active={item.active}>
            {item.icon}
          </SideLink>
        ))}
      </SideNav>
      <Main>
        <ViewBar>
          <Layouts>
            <LayoutButton aria-label="Rows">
              <Icon size={22}>
                <rect x="2" y="2" width="20" height="20" rx="2" />
                <path d="M2 12h20" />
              </Icon>
            </LayoutButton>
            <LayoutButton aria-label="Split">
              <Icon size={22}>
                <rect x="2" y="2" width="20" height="20" rx="2" />
                <path d="M12 2v20" />
              </Icon>
            </LayoutButton>
            <LayoutButton aria-label="Panels">
              <Icon size={22}>
                <rect x="2" y="2" width="20" height="20" rx="2" />
                <path d="M2 12h20M12 12v10" />
              </Icon>
            </LayoutButton>
            <LayoutButton aria-label="List" $active>
              <Icon width={20} height={18} box="0 0 20 18">
                <path d="M6 2h14M6 9h14M6 16h14" />
                <path strokeWidth="4" d="M0 2h4M0 9h4M0 16h4" />
              </Icon>
            </LayoutButton>
            <LayoutButton aria-label="Map">
              <Icon size={22}>
                <path d="M12 22C8 17 5 13.500 5 9.500a7 7 0 0 1 14 0c0 4-3 7.500-7 12.500z" />
                <circle cx="12" cy="9.500" r="2.200" />
              </Icon>
            </LayoutButton>
          </Layouts>
          <ViewActions>
            <GhostButton>
              Filters <Chevron />
            </GhostButton>
            <GhostButton>
              Views <Chevron />
            </GhostButton>
            <Segmented>
              <Segment $active>Open</Segment>
              <Segment>All</Segment>
            </Segmented>
            <GhostButton>Settings</GhostButton>
          </ViewActions>
        </ViewBar>
        <Card>
          <GridActions />
          <Grid />
          <Pager />
        </Card>
        <BottomBand />
      </Main>
    </Body>
  </Page>
);
